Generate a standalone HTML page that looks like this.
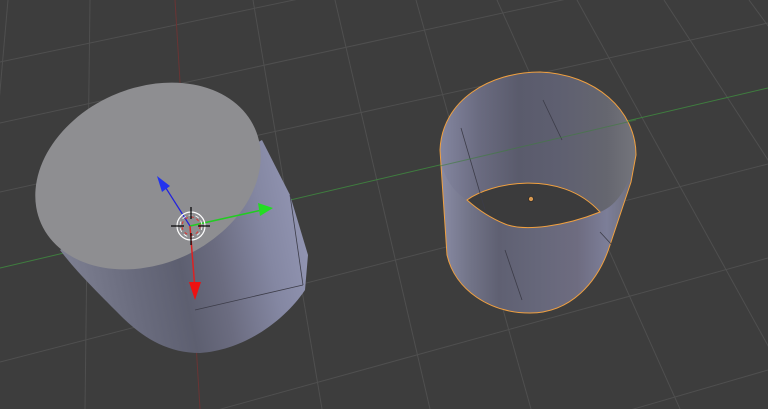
<!DOCTYPE html>
<html><head><meta charset="utf-8"><style>
html,body{margin:0;padding:0;background:#3d3d3d;width:768px;height:409px;overflow:hidden}
svg{display:block;overflow:hidden}
</style></head><body>
<svg width="768" height="409" viewBox="0 0 768 409" xmlns="http://www.w3.org/2000/svg">
<defs>
<linearGradient id="lside" x1="60" y1="250" x2="310" y2="200" gradientUnits="userSpaceOnUse">
<stop offset="0" stop-color="#7e8092"/>
<stop offset="0.25" stop-color="#6a6c7e"/>
<stop offset="0.45" stop-color="#5d5f70"/>
<stop offset="0.6" stop-color="#6b6c80"/>
<stop offset="0.8" stop-color="#8487a2"/>
<stop offset="1" stop-color="#9598b6"/>
</linearGradient>
<linearGradient id="rside" x1="440" y1="0" x2="636" y2="0" gradientUnits="userSpaceOnUse">
<stop offset="0" stop-color="#8a8ca6"/>
<stop offset="0.15" stop-color="#727488"/>
<stop offset="0.3" stop-color="#5f6072"/>
<stop offset="0.5" stop-color="#66677a"/>
<stop offset="0.7" stop-color="#6e6c80"/>
<stop offset="0.85" stop-color="#7c7e98"/>
<stop offset="1" stop-color="#6c6d78"/>
</linearGradient>
<linearGradient id="rin" x1="440" y1="0" x2="636" y2="0" gradientUnits="userSpaceOnUse">
<stop offset="0" stop-color="#8486a0"/>
<stop offset="0.2" stop-color="#6a6b80"/>
<stop offset="0.4" stop-color="#5a5b6c"/>
<stop offset="0.6" stop-color="#5e5f70"/>
<stop offset="0.85" stop-color="#65666f"/>
<stop offset="1" stop-color="#74757c"/>
</linearGradient>
</defs>
<rect width="768" height="409" fill="#3d3d3d"/>
<g stroke="#4f4f4f" stroke-width="1">
<line x1="0" y1="62" x2="768" y2="-100"/>
<line x1="0" y1="123" x2="768" y2="-45"/>
<line x1="0" y1="192" x2="768" y2="23"/>
<line x1="0" y1="362" x2="768" y2="164"/>
<line x1="0" y1="470" x2="768" y2="258"/>
<line x1="0" y1="593" x2="768" y2="370"/>
<line x1="8" y1="0" x2="-28" y2="409"/>
<line x1="90" y1="0" x2="85" y2="409"/>
<line x1="253" y1="0" x2="322" y2="409"/>
<line x1="335" y1="0" x2="430" y2="409"/>
<line x1="416" y1="0" x2="531" y2="409"/>
<line x1="497" y1="0" x2="680" y2="409"/>
<line x1="577" y1="0" x2="803" y2="409"/>
<line x1="664" y1="0" x2="930" y2="409"/>
<line x1="749" y1="0" x2="1050" y2="409"/>
</g>
<line x1="0" y1="268" x2="768" y2="88" stroke="#3f7d3f" stroke-width="1"/>
<line x1="175" y1="0" x2="200" y2="409" stroke="#6a3434" stroke-width="1"/>

<path d="M60,250 L262,140 L290,195 L308,255 L305,290 C285,320 245,350 200,353 C165,353 140,335 120,315 C95,290 75,270 60,250 Z" fill="url(#lside)"/>
<line x1="195" y1="310" x2="303" y2="285" stroke="#3c3c48" stroke-width="0.8"/>
<line x1="290" y1="195" x2="303" y2="285" stroke="#3c3c48" stroke-width="0.8"/>
<ellipse cx="148" cy="176" rx="117" ry="88" transform="rotate(-24 148 176)" fill="#8e8e91"/>

<line x1="190" y1="226" x2="164" y2="185" stroke="#2222dd" stroke-width="1.2"/>
<path d="M157,176 L170,186 L162,192 Z" fill="#2233ee"/>
<line x1="190" y1="226" x2="262" y2="210" stroke="#22cc22" stroke-width="1.5"/>
<path d="M273,208 L258,203 L260,216 Z" fill="#22dd22"/>
<line x1="190" y1="226" x2="195" y2="290" stroke="#dd2222" stroke-width="1.5"/>
<path d="M195,300 L189,282 L201,282 Z" fill="#ee1111"/>
<circle cx="191" cy="226" r="14" fill="none" stroke="#ffffff" stroke-width="1.2"/>
<circle cx="191" cy="226" r="9" fill="none" stroke="#dd3333" stroke-width="1" stroke-dasharray="3 3"/>
<circle cx="191" cy="226" r="11" fill="none" stroke="#ffffff" stroke-width="0.8" stroke-dasharray="4 3"/>
<g stroke="#000" stroke-width="1.2">
<line x1="171" y1="226" x2="184" y2="226"/><line x1="198" y1="226" x2="210" y2="226"/>
<line x1="191" y1="207" x2="191" y2="219"/><line x1="191" y1="233" x2="191" y2="245"/>
</g>

<path d="M440,150 C442,100 490,72 540,72 C595,74 636,110 636,155 L631,182 L610,245 C598,283 570,313 530,313 C490,313 455,290 447,255 Z" fill="url(#rside)"/>
<path d="M440,150 C442,100 490,72 540,72 C595,74 636,110 636,155 C630,185 618,205 600,212 C570,190 500,180 467,200 C450,190 440,170 440,150 Z" fill="url(#rin)"/>
<path d="M467,200 C490,183 560,168 600,212 C565,226 525,232 505,224 C488,217 476,208 467,200 Z" fill="#3b3b3c" stroke="#f0a040" stroke-width="1"/>
<path d="M440,150 C442,100 490,72 540,72 C595,74 636,110 636,155 L631,182 L610,245 C598,283 570,313 530,313 C490,313 455,290 447,255 Z" fill="none" stroke="#f0a040" stroke-width="1"/>
<g stroke="#3c3c48" stroke-width="0.8">
<line x1="461" y1="128" x2="485" y2="210"/>
<line x1="505" y1="250" x2="522" y2="300"/>
<line x1="543" y1="100" x2="562" y2="140"/>
<line x1="600" y1="232" x2="612" y2="245"/>
</g>
<line x1="440" y1="166" x2="636" y2="120" stroke="#3f7d3f" stroke-width="1" opacity="0.6"/>
<circle cx="531" cy="199" r="2.5" fill="#d89850" stroke="#222" stroke-width="0.6"/>
</svg>
</body></html>
